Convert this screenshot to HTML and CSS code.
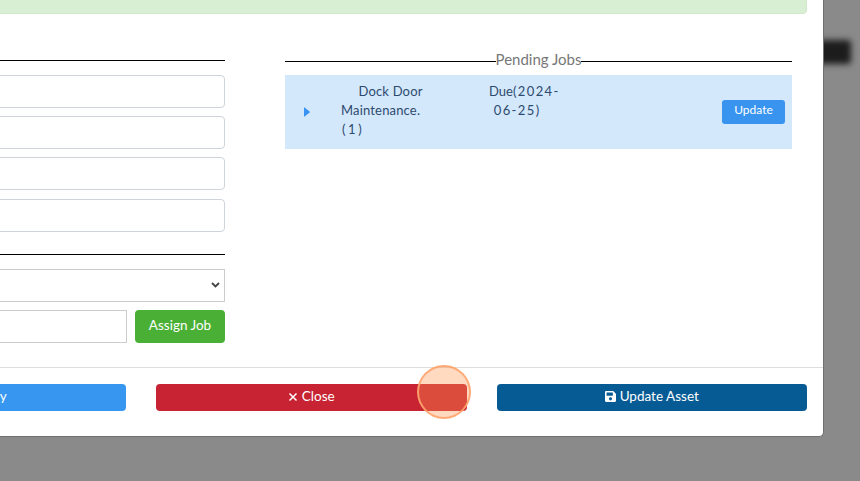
FILE: index.html
```html
<!DOCTYPE html>
<html lang="en">
<head>
<meta charset="utf-8">
<title>Update Asset</title>
<link rel="stylesheet" href="styles.css">
</head>
<body>
<div class="stage">
  <div class="behind"></div>
  <div class="modal">
    <div class="alert"></div>
    <div class="columns">
      <div class="col">
        <div class="rule"></div>
        <div class="fields">
          <input class="field" type="text">
          <input class="field" type="text">
          <input class="field" type="text">
          <input class="field" type="text">
        </div>
        <div class="rule rule-second"></div>
        <select class="picker"><option></option></select>
        <div class="assign">
          <input class="assign-input" type="text">
          <button class="btn btn-green" type="button">Assign Job</button>
        </div>
      </div>
      <div class="col">
        <div class="legend"><span class="legend-text">Pending Jobs</span></div>
        <div class="job">
          <svg class="caret" viewBox="0 0 6 10"><path d="M0.6 0.4 L5.6 4.4 Q6 5 5.6 5.6 L0.6 9.6 Q0 10 0 9 V1 Q0 0 0.6 0.4Z"/></svg>
          <div class="job-name">     Dock Door
Maintenance.
<span class="count">(1)</span></div>
          <div class="job-due">Due<span class="wide">(2024-
 06-25)</span></div>
          <button class="btn btn-small" type="button">Update</button>
        </div>
      </div>
    </div>
    <div class="footer">
      <button class="btn btn-foot btn-blue" type="button">Add Inventory</button>
      <button class="btn btn-foot btn-red" type="button"><svg class="times" viewBox="0 0 10 10"><path d="M1.5 1.5 L8.5 8.5 M8.5 1.5 L1.5 8.5"/></svg> Close</button>
      <button class="btn btn-foot btn-navy" type="button"><svg class="save" viewBox="0 0 448 512"><path d="M433.941 129.941l-83.882-83.882A48 48 0 0 0 316.118 32H48C21.49 32 0 53.49 0 80v352c0 26.51 21.49 48 48 48h352c26.51 0 48-21.49 48-48V163.882a48 48 0 0 0-14.059-33.941zM224 416c-35.346 0-64-28.654-64-64 0-35.346 28.654-64 64-64s64 28.654 64 64c0 35.346-28.654 64-64 64zm96-304.52V212c0 6.627-5.373 12-12 12H76c-6.627 0-12-5.373-12-12V108c0-6.627 5.373-12 12-12h228.52c3.183 0 6.235 1.264 8.485 3.515l3.48 3.48A11.996 11.996 0 0 1 320 111.48z"/></svg> Update Asset</button>
    </div>
  </div>
  <div class="click-mark"></div>
</div>
</body>
</html>
```
FILE: styles.css
```css
* { box-sizing: border-box; }
html, body { margin: 0; padding: 0; height: 100%; }
body { background: #8a8a8a; overflow: hidden; font-family: Lato, "Noto Sans", sans-serif; }
.stage { position: relative; width: 860px; height: 481px; overflow: hidden; }
.behind { position: absolute; left: 815px; top: 40px; width: 36px; height: 24px; background: #1c1c1c; border-radius: 3px; filter: blur(3px); }
.modal { position: relative; width: 1137px; height: 457px; margin: -20px 0 0 -313px; background: #fff; border-right: 1px solid #707070; border-bottom: 1px solid #707070; border-radius: 0 0 5px 0; display: flex; flex-direction: column; }
.alert { height: 34px; margin: 0 16px; background: #d8efd3; border: 1px solid #d0e9c9; border-radius: 0 0 4px 4px; flex: none; }
.columns { display: grid; grid-template-columns: 507px 507px; column-gap: 60px; padding: 36px 0 0 31px; flex: 1; }
.rule { height: 1px; margin-top: 10px; background: #000; }
.rule-second { margin-top: 22px; }
.fields { display: flex; flex-direction: column; gap: 8.2px; margin-top: 14px; }
.field { display: block; width: 100%; height: 33px; border: 1px solid #ced4da; border-radius: 4px; background: #fff; }
.picker { display: block; width: 100%; height: 33px; margin-top: 14px; border: 1px solid #ccc; border-radius: 0; appearance: none; background: #fff url("data:image/svg+xml,%3Csvg xmlns='http://www.w3.org/2000/svg' viewBox='0 0 9 6'%3E%3Cpath d='M1 1l3.5 3.5L8 1' fill='none' stroke='%23444' stroke-width='1.8'/%3E%3C/svg%3E") no-repeat right 4px center / 9px 6px; }
.assign { display: flex; gap: 8px; margin-top: 8px; }
.assign-input { flex: 1; min-width: 0; height: 33px; border: 1px solid #ccc; border-radius: 0; }
.legend { display: flex; align-items: center; height: 21px; color: #777; font-size: 15px; }
.legend::before, .legend::after { content: ""; flex: 1; height: 1px; background: #000; margin-top: 1px; }
.legend-text { padding-bottom: 4px; }
.job { display: flex; align-items: center; height: 74px; margin-top: 4px; background: #d4e8fc; color: #2d4a6e; font-size: 13px; line-height: 19px; }
.caret { width: 6px; height: 10px; margin-left: 19px; fill: #3a93ee; flex: none; }
.job-name { white-space: pre; margin: -4px 0 0 31px; width: 148px; flex: none; letter-spacing: 0.17px; }
.job-due { white-space: pre; margin-top: -23px; flex: 1; }
.wide { letter-spacing: 1.4px; }
.count { letter-spacing: 2.6px; padding-left: 1px; }
.btn { border: 0; color: #fff; font-family: inherit; font-size: 13px; cursor: pointer; }
.btn-green { width: 90px; height: 33px; padding: 0 0 3px; background: #4ab035; border-radius: 4px; font-size: 13.5px; flex: none; }
.btn-small { width: 63px; height: 24px; margin-right: 7px; padding: 0 0 5px; background: #3894ee; border-radius: 3px; font-size: 12px; flex: none; }
.footer { flex: none; height: 69px; border-top: 1px solid #dedede; display: flex; justify-content: flex-end; gap: 30px; padding: 16px 16px 0 0; }
.btn-foot { width: 311px; height: 27px; padding: 0 0 3px; border-radius: 4px; font-size: 13.5px; }
.btn-blue { background: #3797f0; padding-right: 12px; }
.btn-red { background: #c72333; }
.btn-navy { background: #075b94; width: 310px; }
.save { width: 11px; height: 13px; fill: #fff; vertical-align: -2px; }
.times { width: 10px; height: 10px; fill: none; stroke: #fff; stroke-width: 1.5; vertical-align: -1px; }
.click-mark { position: absolute; left: 417px; top: 365px; width: 54px; height: 54px; border-radius: 50%; background: rgba(255, 150, 80, 0.36); border: 2px solid rgba(255, 165, 110, 0.9); }
```
